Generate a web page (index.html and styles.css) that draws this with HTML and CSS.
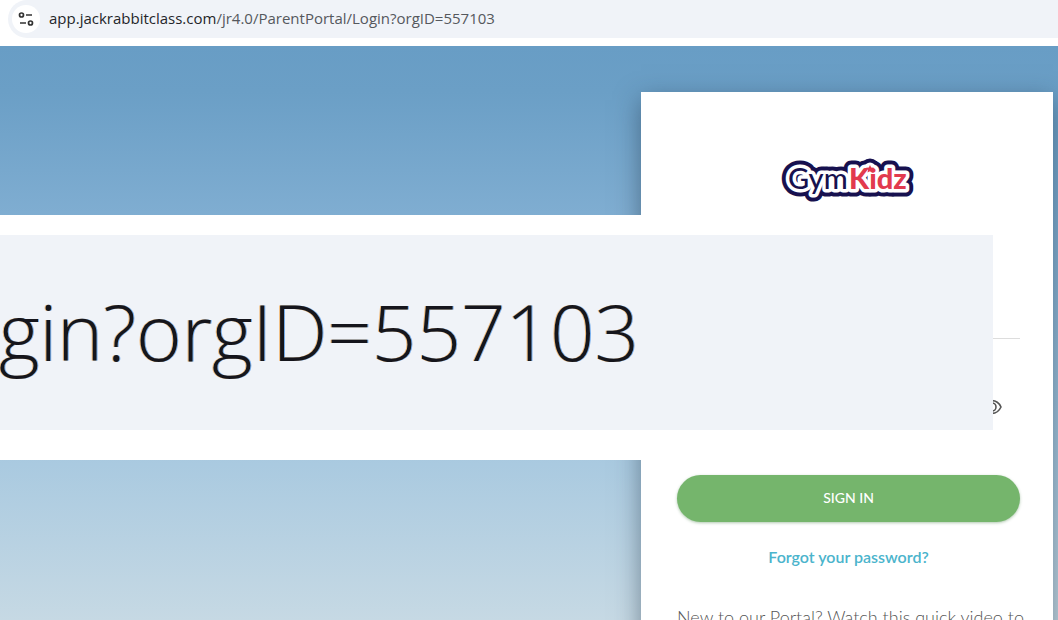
FILE: index.html
```
<!DOCTYPE html>
<html lang="en">
<head>
	<meta charset="UTF-8">
	<title>Parent Portal</title>
	<link rel="stylesheet" href="styles.css">
</head>
<body>
	<header class="browser">
		<div class="address">
			<button type="button" class="site-info" aria-label="Site information">
				<svg width="16" height="14" viewBox="0 0 16 14" fill="none" stroke="#333" stroke-width="1.7">
					<circle cx="3.500" cy="3" r="2"/>
					<path d="M8 3h6M2 11h6"/>
					<circle cx="12.500" cy="11" r="2"/>
				</svg>
			</button>
			<div class="url"><span class="host">app.jackrabbitclass.com</span>/jr4.0/ParentPortal/Login?orgID=557103</div>
		</div>
	</header>
	<main class="page">
		<form class="card">
			<svg class="logo" width="136" height="44" viewBox="0 0 136 44" role="img" aria-label="GymKidz">
				<g class="logo-edge">
					<text x="7" y="31" class="gym">Gym</text>
					<text x="68" y="31" class="kidz">Kidz</text>
					<circle cx="89" cy="10" r="2"/>
				</g>
				<g class="logo-gap">
					<text x="7" y="31" class="gym">Gym</text>
					<text x="68" y="31" class="kidz">Kidz</text>
					<circle cx="89" cy="10" r="2"/>
				</g>
				<text x="7" y="31" class="gym">Gym</text>
				<text x="68" y="31" class="kidz">Kidz</text>
				<path class="star" d="M89 7l1.200 2.400 2.800.4-2 2 .5 2.700-2.500-1.300-2.500 1.300.5-2.700-2-2 2.800-.4z"/>
			</svg>
			<input type="email" class="field email" aria-label="Email">
			<div class="password">
				<input type="password" class="field" aria-label="Password">
				<button type="button" class="eye" aria-label="Show password">
					<svg width="20" height="16" viewBox="0 0 20 16" fill="none" stroke="#555" stroke-width="1.6">
						<path d="M1 8C5 -.5 15 -.5 19 8C15 16.500 5 16.500 1 8z"/>
						<circle cx="10" cy="8" r="4"/>
					</svg>
				</button>
			</div>
			<button type="submit" class="signin">SIGN IN</button>
			<a href="#" class="forgot">Forgot your password?</a>
			<p class="intro">New to our Portal? Watch this quick video to</p>
		</form>
		<!-- enlarged end of the address, lies over the login card -->
		<div class="callout">
			<div class="callout-text">gin?orgID=557103</div>
		</div>
	</main>
</body>
</html>
```
FILE: styles.css
```
*{
	margin: 0;
	padding: 0;
	box-sizing: border-box;
}
body{
	height: 100vh;
	display: flex;
	flex-direction: column;
	overflow: hidden;
	font-family: Lato, sans-serif;
	background: #fff;
}
button{
	border: 0;
	background: none;
	cursor: pointer;
}
.browser{
	height: 46px;
	flex: none;
	padding: 0 0 8px 8px;
	background: #fff;
}
.address{
	height: 38px;
	display: flex;
	align-items: center;
	gap: 9px;
	padding-left: 4px;
	background: #f0f3f8;
	border-radius: 19px 0 0 19px;
}
.site-info{
	width: 28px;
	height: 28px;
	display: flex;
	align-items: center;
	justify-content: center;
	border-radius: 50%;
	background: #fff;
}
.url{
	padding-bottom: 2px;
	font: 15px/36px "Open Sans", sans-serif;
	color: #55585d;
	white-space: nowrap;
}
.host{
	color: #24262a;
}
.page{
	flex: 1;
	min-height: 0;
	position: relative;
	display: flex;
	justify-content: flex-end;
	padding: 46px 5px 0 0;
	overflow: hidden;
	background: linear-gradient(#689dc5 0%, #6b9fc6 8%, #7fadd1 29%, #aacae0 73%, #c6d9e4 100%);
}
.card{
	width: 39%;
	min-width: 412px;
	height: 100vh;
	display: flex;
	flex-direction: column;
	padding: 66px 33px 0 36px;
	background: #fff;
	box-shadow: 0 8px 24px rgba(30, 50, 70, .5);
}
.logo{
	align-self: center;
	flex: none;
	overflow: visible;
}
.gym,
.kidz{
	font-family: Lato, sans-serif;
	font-size: 29px;
	font-weight: 500;
	fill: #17114f;
}
.kidz{
	font-weight: 900;
	fill: #e23a4e;
}
.star{
	fill: #e23a4e;
}
.logo-edge *{
	stroke: #17114f;
	stroke-width: 15px;
	stroke-linejoin: round;
}
.logo-gap *{
	fill: #fff;
	stroke: #fff;
	stroke-width: 7px;
	stroke-linejoin: round;
}
.field{
	width: 100%;
	height: 46px;
	border: 0;
	outline: 0;
	font: 17px Lato, sans-serif;
}
.email{
	margin-top: 91px;
	border-bottom: 1px solid #ddd;
}
.password{
	display: flex;
	align-items: center;
	margin-top: 45px;
	padding-right: 18px;
}
.eye{
	display: flex;
}
.signin{
	height: 47px;
	flex: none;
	margin-top: 45px;
	padding-bottom: 2px;
	border-radius: 24px;
	background: #75b56c;
	box-shadow: 0 1px 3px rgba(60, 120, 60, .4);
	color: #fff;
	font: 500 14px Lato, sans-serif;
}
.forgot{
	align-self: center;
	margin-top: 23px;
	color: #4bb4cc;
	font-size: 16px;
	font-weight: 600;
	line-height: 24px;
	text-decoration: none;
}
.intro{
	margin-top: 36px;
	color: #555;
	font-size: 18px;
	font-weight: 300;
	line-height: 24px;
	white-space: nowrap;
}
.callout{
	position: absolute;
	top: 169px;
	left: 0;
	right: 65px;
	padding: 20px 0 30px;
	background: #fff;
}
.callout-text{
	height: 195px;
	display: flex;
	justify-content: flex-end;
	padding-right: 354px;
	overflow: hidden;
	background: #f0f3f8;
	color: #15151c;
	font: 350 78px/192px "Open Sans", sans-serif;
	text-shadow: -1px 0 rgba(240, 150, 40, .6), 1px 0 rgba(40, 130, 230, .6);
	white-space: nowrap;
}
```
